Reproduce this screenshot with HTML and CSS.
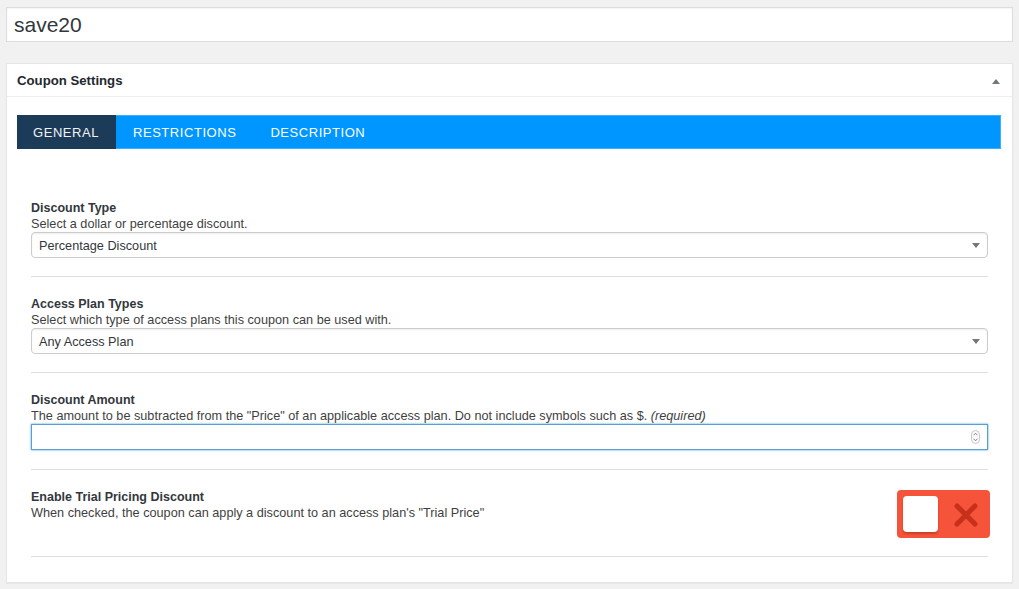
FILE: index.html
```html
<!DOCTYPE html>
<html>
<head>
<meta charset="utf-8">
<link rel="stylesheet" href="styles.css">
</head>
<body>
<div class="title-wrap"><div class="title-input">save20</div></div>

<div class="panel">
  <div class="panel-head">
    <span class="panel-title">Coupon Settings</span>
    <svg class="toggle-arrow" width="10" height="6" viewBox="0 0 10 6"><path d="M1 6 L5 1 L9 6 Z" fill="#72777c"/></svg>
  </div>
  <div class="panel-body">
    <div class="tabs">
      <div class="tab active">General</div>
      <div class="tab">Restrictions</div>
      <div class="tab">Description</div>
    </div>
    <div class="tab-content">
      <div class="field">
        <div class="label">Discount Type</div>
        <div class="desc">Select a dollar or percentage discount.</div>
        <div class="select"><span>Percentage Discount</span><svg width="8" height="5" viewBox="0 0 8 5"><path d="M0 0 H8 L4 5 Z" fill="#777"/></svg></div>
      </div>
      <div class="field">
        <div class="label">Access Plan Types</div>
        <div class="desc">Select which type of access plans this coupon can be used with.</div>
        <div class="select"><span>Any Access Plan</span><svg width="8" height="5" viewBox="0 0 8 5"><path d="M0 0 H8 L4 5 Z" fill="#777"/></svg></div>
      </div>
      <div class="field field-num">
        <div class="label">Discount Amount</div>
        <div class="desc">The amount to be subtracted from the "Price" of an applicable access plan. Do not include symbols such as $. <em>(required)</em></div>
        <div class="number"><svg width="9" height="14" viewBox="0 0 9 14"><rect x="0.5" y="0.5" width="8" height="13" rx="4" fill="#fafafa" stroke="#c8c8c8"/><path d="M2.6 5.2 L4.5 3.2 L6.4 5.2" fill="none" stroke="#777" stroke-width="0.9"/><path d="M2.6 8.8 L4.5 10.8 L6.4 8.8" fill="none" stroke="#777" stroke-width="0.9"/></svg></div>
      </div>
      <div class="field field-switch">
        <div class="switch-text">
          <div class="label">Enable Trial Pricing Discount</div>
          <div class="desc">When checked, the coupon can apply a discount to an access plan's "Trial Price"</div>
        </div>
        <div class="switch">
          <div class="knob"></div>
          <svg class="x" width="24" height="24" viewBox="0 0 24 24"><path d="M3 3 L21 21 M21 3 L3 21" stroke="#c7301a" stroke-width="5" stroke-linecap="round"/></svg>
        </div>
      </div>
    </div>
  </div>
</div>
</body>
</html>
```

FILE: styles.css
```css
* { box-sizing: border-box; }
html, body { margin: 0; }
body {
  background: #f1f1f1;
  padding: 7px 6px 0;
  font-family: "Liberation Sans", Arial, sans-serif;
  color: #23282d;
  width: 1019px;
  height: 589px;
  overflow: hidden;
}
.title-input {
  height: 35px;
  background: #fff;
  border: 1px solid #ddd;
  box-shadow: inset 0 1px 2px rgba(0,0,0,.05);
  font-size: 21px;
  line-height: 33px;
  padding-left: 7px;
  color: #32373c;
}
.panel {
  margin-top: 21px;
  background: #fff;
  border: 1px solid #e5e5e5;
  box-shadow: 0 1px 1px rgba(0,0,0,.04);
}
.panel-head {
  height: 33px;
  border-bottom: 1px solid #eee;
  display: flex;
  align-items: center;
  justify-content: space-between;
  padding: 0 11px 0 10px;
}
.panel-title {
  font-size: 13.2px;
  font-weight: bold;
  color: #23282d;
  margin-top: 1px;
}
.toggle-arrow { margin-top: 2px; margin-right: 0; }
.panel-body {
  padding: 18px 11px 25px 10px;
}
.tabs {
  display: flex;
  height: 34px;
  background: #0096ff;
  border: 1px solid #3aaeff;
}
.tab {
  text-transform: uppercase;
  color: #fff;
  font-size: 13px;
  letter-spacing: 0.55px;
  display: flex;
  align-items: center;
  padding: 0 17px;
}
.tab.active {
  background: #1c3b58;
  margin: -1px 0 -1px -1px;
  padding: 0 17px 0 16px;
  color: #f0f3f6;
}
.tab-content {
  padding: 33px 13px 0 14px;
}
.field {
  padding: 18px 0 18px;
  border-bottom: 1px solid #dedede;
}
.tab-content .field:first-child { padding-top: 17px; }
.label {
  font-size: 12.5px;
  font-weight: bold;
  line-height: 16px;
  color: #32373c;
  padding-top: 1px;
}
.desc {
  font-size: 12.7px;
  line-height: 16px;
  color: #3f3f3f;
}
.desc em { font-style: italic; }
.select {
  height: 26px;
  border: 1px solid #ccc;
  border-radius: 4px;
  box-shadow: inset 0 1px 2px rgba(0,0,0,.07);
  display: flex;
  align-items: center;
  justify-content: space-between;
  padding: 1px 7px 0 7px;
  font-size: 12.7px;
  color: #32373c;
}
.field-num { padding-bottom: 19px; }
.number {
  height: 26px;
  border: 1px solid #5b9dd9;
  box-shadow: 0 0 2px rgba(30,140,190,.8);
  display: flex;
  align-items: center;
  justify-content: flex-end;
  padding-right: 7px;
}
.field-switch {
  display: flex;
  justify-content: space-between;
  align-items: flex-start;
  padding-bottom: 18px;
}
.switch {
  margin-top: 2px;
  margin-right: -2px;
  width: 93px;
  height: 48px;
  background: #f5533a;
  border-radius: 4px;
  display: flex;
  align-items: center;
  padding-left: 6px;
}
.knob {
  width: 35px;
  height: 36px;
  background: #fff;
  border-radius: 4px;
  box-shadow: 0 2px 2px rgba(120,30,10,.35);
}
.x { margin-left: 16px; margin-top: 1px; }
```
